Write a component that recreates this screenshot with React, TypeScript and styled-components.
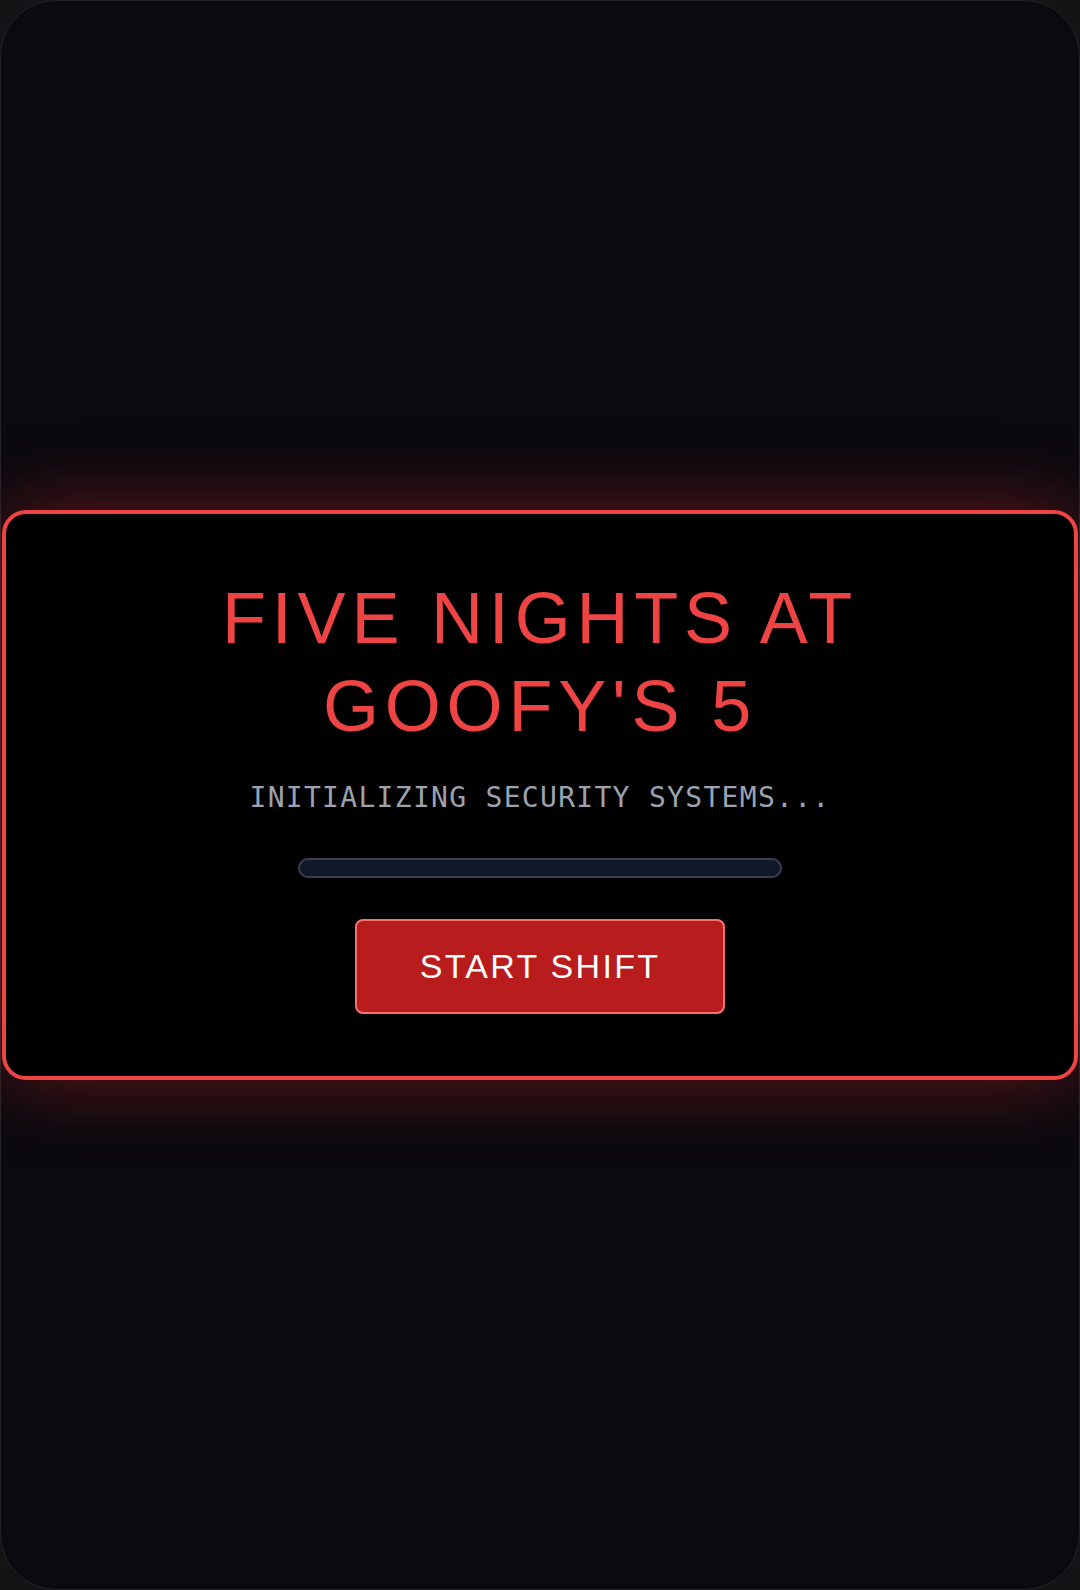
import React from "react";
import styled, { createGlobalStyle } from "styled-components";

const GlobalStyle = createGlobalStyle`
  html, body {
    margin: 0;
    padding: 0;
    background: #141417;
  }
  #root {
    min-height: 100vh;
  }
  * {
    box-sizing: border-box;
  }
`;

const Frame = styled.div`
  min-height: 100vh;
  border: 1px solid #232327;
  border-radius: 56px;
  background: #0a0a0f;
  display: flex;
  align-items: center;
  justify-content: center;
  padding: 0 1px;
`;

const Card = styled.section`
  width: 100%;
  border: 4px solid #ef4444;
  border-radius: 24px;
  background: #000000;
  padding: 60px 24px 62px;
  display: flex;
  flex-direction: column;
  align-items: center;
  box-shadow: 0 0 80px rgba(220, 38, 38, 0.42);
`;

const Title = styled.h1`
  margin: 0 0 32px;
  max-width: 720px;
  font-family: "Liberation Sans", Arial, sans-serif;
  font-weight: 400;
  font-size: 72px;
  line-height: 88px;
  letter-spacing: 5.8px;
  color: #ef4444;
  text-align: center;
`;

const Subtitle = styled.p`
  margin: 0 0 44px;
  font-family: "DejaVu Sans Mono", "Liberation Mono", monospace;
  font-size: 28px;
  line-height: 32px;
  letter-spacing: 1.3px;
  color: #9ca3af;
  text-align: center;
`;

const Track = styled.div`
  width: 484px;
  height: 20px;
  border: 2px solid #374151;
  border-radius: 9999px;
  background: #111827;
  overflow: hidden;
  margin-bottom: 41px;
`;

const Fill = styled.div`
  height: 100%;
  background: #dc2626;
`;

const StartButton = styled.button`
  margin: 0;
  padding: 26px 63px;
  border: 2px solid #f87171;
  border-radius: 8px;
  background: #b91c1c;
  color: #ffffff;
  font-family: "Liberation Sans", Arial, sans-serif;
  font-size: 34px;
  line-height: 39px;
  letter-spacing: 2.3px;
  cursor: pointer;
`;

export default function App() {
  const progress = 0;
  return (
    <>
      <GlobalStyle />
      <Frame>
        <Card>
          <Title>FIVE NIGHTS AT GOOFY'S 5</Title>
          <Subtitle>INITIALIZING SECURITY SYSTEMS...</Subtitle>
          <Track>
            <Fill style={{ width: `${progress}%` }} />
          </Track>
          <StartButton type="button">START SHIFT</StartButton>
        </Card>
      </Frame>
    </>
  );
}
